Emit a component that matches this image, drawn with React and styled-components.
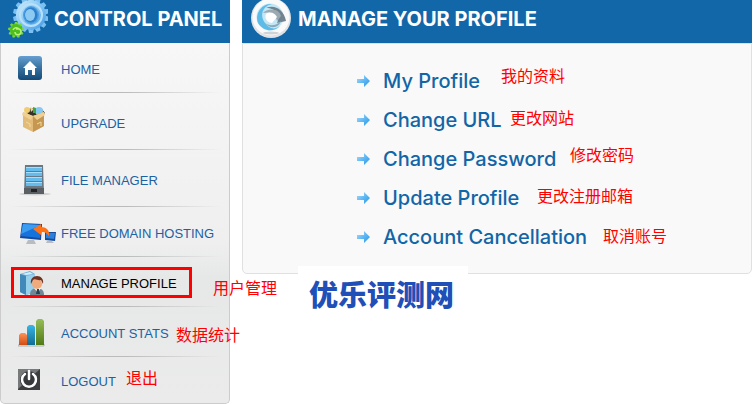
import React from "react";
import styled, { createGlobalStyle } from "styled-components";

const navItems = [
  { label: "HOME", icon: HomeIcon },
  { label: "UPGRADE", icon: BoxIcon, tall: true },
  { label: "FILE MANAGER", icon: ServerIcon, tall: true },
  { label: "FREE DOMAIN HOSTING", icon: DomainIcon },
  { label: "MANAGE PROFILE", icon: ProfileIcon, active: true, note: "用户管理", noteX: 212, noteY: 18 },
  { label: "ACCOUNT STATS", icon: StatsIcon, note: "数据统计", noteX: 175, noteY: 15 },
  { label: "LOGOUT", icon: PowerIcon, note: "退出", noteX: 125, noteY: 8 },
];

const profileLinks = [
  { label: "My Profile", note: "我的资料", noteX: 144, noteY: 2 },
  { label: "Change URL", note: "更改网站", noteX: 153, noteY: 5 },
  { label: "Change Password", note: "修改密码", noteX: 213, noteY: 3 },
  { label: "Update Profile", note: "更改注册邮箱", noteX: 180, noteY: 5 },
  { label: "Account Cancellation", note: "取消账号", noteX: 246, noteY: 6 },
];

const gearTeeth = Array.from({ length: 14 }, (_, i) => (i * 360) / 14);
const smallGearTeeth = Array.from({ length: 9 }, (_, i) => i * 40);

const App = () => {
  return (
    <>
      <GlobalStyle />
      <Page>
        <Sidebar>
          <Header>
            <GearsIcon />
            <Title>CONTROL PANEL</Title>
          </Header>
          <NavList>
            {navItems.map(({ label, icon: Icon, tall, active, note, noteX, noteY }) => (
              <NavItem key={label} $tall={tall}>
                <NavLink href="#" $active={active} $tall={tall}>
                  <Icon />
                  <span>{label}</span>
                </NavLink>
                {active && <Highlight />}
                {note && (
                  <Note $x={noteX} $y={noteY}>
                    {note}
                  </Note>
                )}
              </NavItem>
            ))}
          </NavList>
        </Sidebar>
        <Main>
          <Header>
            <SwirlIcon />
            <Title>MANAGE YOUR PROFILE</Title>
          </Header>
          <LinkPanel>
            {profileLinks.map(({ label, note, noteX, noteY }) => (
              <LinkRow key={label}>
                <ProfileLink href="#">
                  <ArrowIcon />
                  <span>{label}</span>
                </ProfileLink>
                <Note $x={noteX} $y={noteY}>
                  {note}
                </Note>
              </LinkRow>
            ))}
          </LinkPanel>
          <Watermark>优乐评测网</Watermark>
        </Main>
      </Page>
    </>
  );
};

function GearsIcon() {
  return (
    <svg width="40" height="43" viewBox="0 0 40 43" aria-hidden="true">
      <defs>
        <linearGradient id="gear" x1="0" y1="0" x2="1" y2="1">
          <stop offset="0" stopColor="#d3eefc" />
          <stop offset="0.5" stopColor="#83c6f3" />
          <stop offset="1" stopColor="#3f96e6" />
        </linearGradient>
      </defs>
      {gearTeeth.map((angle) => (
        <path key={angle} d="M20 2l1-5h4l1 5z" fill="#7bc0f0" transform={`rotate(${angle} 23 15)`} />
      ))}
      <circle cx="23" cy="15" r="15" fill="url(#gear)" />
      <circle cx="23" cy="15" r="11" fill="none" stroke="#b9e0f9" strokeWidth="2" />
      <ellipse cx="23" cy="15" rx="8" ry="9" fill="#4b9de2" />
      <ellipse cx="23" cy="15" rx="6.500" ry="7.500" fill="#2c7fcb" />
      <ellipse cx="22" cy="15" rx="5" ry="6" fill="#8ccaf2" />
      {smallGearTeeth.map((angle) => (
        <path key={angle} d="M6 25l1-3h2l1 3z" fill="#76d838" transform={`rotate(${angle} 8 30)`} />
      ))}
      <circle cx="8" cy="30" r="6" fill="#4fbd20" />
      <path d="M5 30a3.500 3.500 0 0 1 6-1M8 29h3a3 3 0 1 1-4 3" fill="none" stroke="#b9f374" strokeWidth="1.500" />
    </svg>
  );
}

function SwirlIcon() {
  return (
    <svg width="42" height="43" viewBox="0 0 42 43" aria-hidden="true">
      <circle cx="21" cy="18" r="20" fill="#dfe3e6" />
      <circle cx="21" cy="17" r="18.500" fill="#fafafa" />
      <ellipse cx="21" cy="33" rx="8" ry="1.500" fill="#cfd3d6" />
      <circle cx="20" cy="17" r="13.500" fill="#c4e7f6" />
      <path d="M8 23A14 14 0 0 1 22 4C13 6 9 15 15 23C19 29 25 30 30 26C23 33 13 31 8 23Z" fill="#5dbce7" />
      <path d="M16 8C24 4 34 9 36 21L27 23C31 16 26 8 16 8Z" fill="#6f8390" />
      <path d="M13 13C17 8 29 8 31 16L27 21C26 14 20 11 13 13Z" fill="#9ba9b2" />
      <path d="M14 22C19 27 26 26 31 21C29 28 20 30 14 22Z" fill="#8aaabb" />
      <path d="M16 14c4-3 9-1 11 3l-5 6c-4 0-8-4-6-9z" fill="#fff" />
    </svg>
  );
}

function HomeIcon() {
  return (
    <IconSvg viewBox="0 0 40 32" aria-hidden="true">
      <defs>
        <linearGradient id="home" x2="0" y2="1">
          <stop offset="0" stopColor="#669fd0" />
          <stop offset="0.5" stopColor="#37719f" />
          <stop offset="1" stopColor="#154a77" />
        </linearGradient>
      </defs>
      <rect x="0" y="3" width="24" height="24" rx="3" fill="url(#home)" />
      <path d="M12 8l7 7h-2v7h-3v-5h-4v5H7v-7H5z" fill="#fff" />
    </IconSvg>
  );
}

function BoxIcon() {
  return (
    <IconSvg viewBox="0 0 40 32" aria-hidden="true">
      <path d="M7 4l6-3 10 0 4 5-10 8z" fill="#35322b" />
      <circle cx="9" cy="3" r="3" fill="#f1cc73" />
      <path d="M12 0l4 2-3 3z" fill="#ead691" />
      <circle cx="21" cy="4" r="4" fill="#86c9f2" />
      <path d="M15 0l3 1v5h-3z" fill="#43a348" />
      <path d="M5 5l10 4 11-4v14l-11 6-10-5z" fill="#e2bb78" />
      <path d="M15 9l11-4v14l-11 6z" fill="#c69750" />
      <path d="M5 5l10 4-2 4-9-5zM26 5L15 9l4 4 8-5z" fill="#f0d092" />
      <path d="M8 15l4 2v3M19 17l4-2v4" fill="none" stroke="#f4da9f" />
    </IconSvg>
  );
}

function ServerIcon() {
  return (
    <IconSvg viewBox="0 0 40 32" aria-hidden="true">
      <ellipse cx="17" cy="30" rx="16" ry="1.500" fill="#d0d1d2" />
      <path d="M7 1h18l1 28H6z" fill="#687985" />
      <path d="M6 24h20v6H6z" fill="#5a5f63" />
      <path d="M8 3h16v4H8zM8 8h16v4H8zM8 13h16v4H8zM8 18h16v4H8z" fill="#64bcec" />
      <path d="M8 3.500h16M8 8.500h16M8 13.500h16M8 18.500h16" stroke="#a8def9" />
      <path d="M13 25h6v3h-6z" fill="#202326" />
    </IconSvg>
  );
}

function DomainIcon() {
  return (
    <IconSvg viewBox="0 0 40 32" aria-hidden="true">
      <path d="M4 6l20 1-1 16L2 21z" fill="#174a9d" />
      <path d="M5 7l18 1-1 13L3 19z" fill="#1672dd" />
      <path d="M5 7l18 1L3 17z" fill="#3c9df0" />
      <path d="M10 23h6l2 4H8z" fill="#b9bdc1" />
      <path d="M27 15h11l-1 9-10-1z" fill="#164b9f" />
      <path d="M28 16h9l-1 6-8-1z" fill="#2a80dc" />
      <path d="M29 24h5l2 2h-8z" fill="#b9bdc1" />
      <path d="M15 12l8-5v3c5 0 9 3 8 9-3-4-5-4-8-4v3z" fill="#ff7316" />
    </IconSvg>
  );
}

function ProfileIcon() {
  return (
    <IconSvg viewBox="0 0 40 32" aria-hidden="true">
      <path d="M2 7l10-3 5 3v18L8 28l-6-3z" fill="#6baed9" />
      <path d="M2 7l6 2v19l-6-3z" fill="#4189b8" />
      <path d="M8 9l9-2v18l-9 3z" fill="#98d0ec" />
      <path d="M4 7l8-2 3 2-7 1z" fill="#d4efff" />
      <path d="M12 28c0-5 3-7 7-7s7 2 7 7z" fill="#718794" />
      <path d="M16 21h7l-3 5z" fill="#fff" />
      <path d="M19 22h2l1 5h-4z" fill="#294357" />
      <circle cx="19" cy="17" r="5" fill="#f0aa7b" />
      <path d="M13 17c-1-5 2-8 6-8s7 3 6 8l-2-4c-3 1-6-2-8 0z" fill="#723222" />
    </IconSvg>
  );
}

function StatsIcon() {
  return (
    <IconSvg viewBox="0 0 40 32" aria-hidden="true">
      <defs>
        <linearGradient id="barOrange" x2="0" y2="1">
          <stop offset="0" stopColor="#ff9155" />
          <stop offset="1" stopColor="#d24d12" />
        </linearGradient>
        <linearGradient id="barBlue" x2="0" y2="1">
          <stop offset="0" stopColor="#38b6e6" />
          <stop offset="1" stopColor="#126c91" />
        </linearGradient>
        <linearGradient id="barGreen" x2="0" y2="1">
          <stop offset="0" stopColor="#96bd58" />
          <stop offset="1" stopColor="#4f7a15" />
        </linearGradient>
      </defs>
      <path d="M0 27v2h26v-2" fill="none" stroke="#abb2b1" />
      <path d="M1 28V18l2-2h4l2 2v10z" fill="url(#barOrange)" />
      <path d="M9 28V10l2-2h4l2 2v18z" fill="url(#barBlue)" />
      <path d="M18 28V4l2-2h4l2 2v24z" fill="url(#barGreen)" />
    </IconSvg>
  );
}

function PowerIcon() {
  return (
    <IconSvg viewBox="0 0 40 32" aria-hidden="true">
      <path d="M0 4h22v21H0z" fill="#3c3e40" />
      <path d="M0 4h22L0 24z" fill="#77797a" />
      <circle cx="11" cy="15" r="9" fill="#37393b" />
      <path d="M7 9a7 7 0 1 0 8 0M11 6v8" fill="none" stroke="#fff" strokeWidth="2.500" strokeLinecap="round" />
    </IconSvg>
  );
}

function ArrowIcon() {
  return (
    <svg width="14" height="14" viewBox="0 0 14 14" aria-hidden="true">
      <defs>
        <linearGradient id="arrow" x2="1" y2="1">
          <stop offset="0" stopColor="#b4dcf8" />
          <stop offset="0.5" stopColor="#5db8f3" />
          <stop offset="1" stopColor="#2a94e4" />
        </linearGradient>
      </defs>
      <path d="M0 5h7V1l6 6-6 6V9H0z" fill="url(#arrow)" />
    </svg>
  );
}

const GlobalStyle = createGlobalStyle`
  * {
    box-sizing: border-box;
  }

  body {
    margin: 0;
    background: #fff;
    font-family: "Liberation Sans", "Noto Sans CJK SC", sans-serif;
  }

  svg {
    flex-shrink: 0;
  }
`;

const Page = styled.div`
  display: grid;
  grid-template-columns: 230px 1fr;
  gap: 12px;
  align-items: start;
  padding-right: 2px;
`;

const Sidebar = styled.nav`
  min-width: 0;
`;

const Main = styled.main`
  position: relative;
  min-width: 0;
`;

const Header = styled.header`
  display: flex;
  height: 43px;
  padding-left: 8px;
  gap: 6px;
  background: #1167a8;
`;

const Title = styled.h1`
  margin: 0;
  color: #fff;
  font-family: Inter, sans-serif;
  font-size: 20px;
  font-weight: 700;
  line-height: 38px;
  white-space: nowrap;
`;

const NavList = styled.ul`
  margin: 0;
  padding: 0;
  list-style: none;
  border: solid #ccc;
  border-width: 0 1px 1px;
  border-radius: 0 0 5px 5px;
  background: linear-gradient(#f7f7f7, #efefef 55%, #e6e8e7 65%, #ebebeb);
`;

const NavItem = styled.li`
  position: relative;
  height: ${(props) => (props.$tall ? "57px" : "50px")};
  padding: 0 8px;

  &:not(:last-child)::after {
    content: "";
    display: block;
    height: 1px;
    background: linear-gradient(90deg, transparent, #bbb 45%, #bbb 55%, transparent);
  }

  &:last-child {
    height: 46px;
  }
`;

const NavLink = styled.a`
  display: flex;
  align-items: center;
  gap: 3px;
  height: calc(100% - 1px);
  padding: ${(props) => (props.$tall ? "4px" : "3px")} 0 0 9px;
  color: ${(props) => (props.$active ? "#000" : "#1b62a5")};
  font-size: 13px;
  text-decoration: none;
  white-space: nowrap;
`;

const IconSvg = styled.svg`
  width: 40px;
  height: 32px;
`;

const Highlight = styled.div`
  position: absolute;
  top: 10px;
  left: 10px;
  width: 181px;
  height: 31px;
  border: 3px solid #f00;
  pointer-events: none;
`;

const Note = styled.span`
  position: absolute;
  z-index: 1;
  top: ${(props) => props.$y}px;
  left: ${(props) => props.$x}px;
  color: #f00;
  font-family: "Noto Sans CJK SC", sans-serif;
  font-size: 16px;
  font-weight: 400;
  line-height: 24px;
  white-space: nowrap;
`;

const LinkPanel = styled.ul`
  margin: 0;
  padding: 17px 0 17px 114px;
  list-style: none;
  border: 1px solid #e0e0e0;
  border-radius: 0 0 5px 5px;
  background: #f9f9f9;
`;

const LinkRow = styled.li`
  position: relative;
  height: 39px;
`;

const ProfileLink = styled.a`
  display: inline-flex;
  align-items: center;
  gap: 12px;
  height: 100%;
  color: #1265a6;
  font-family: Inter, sans-serif;
  font-size: 20px;
  font-weight: 500;
  text-decoration: none;
  white-space: nowrap;
`;

const Watermark = styled.div`
  position: absolute;
  top: 266px;
  left: 56px;
  width: 170px;
  padding: 0 11px;
  background: #fff;
  color: #214fb8;
  font-family: "Noto Sans CJK SC", sans-serif;
  font-size: 29px;
  font-weight: 900;
  line-height: 54px;
  white-space: nowrap;
`;

export default App;
